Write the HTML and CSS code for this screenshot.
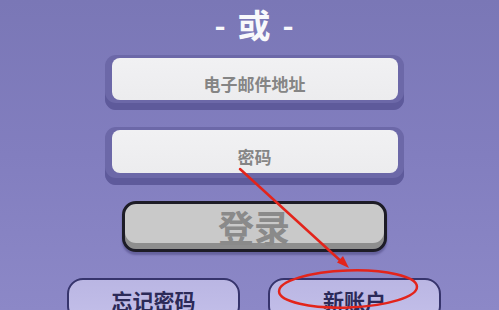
FILE: index.html
```html
<!DOCTYPE html>
<html lang="zh">
<head>
<meta charset="utf-8">
<link rel="stylesheet" href="styles.css">
</head>
<body>
<div class="screen">
  <div class="title"><span class="dash">-</span><span>或</span><span class="dash">-</span></div>
  <div class="field"><div class="field-inner">电子邮件地址</div></div>
  <div class="field field-pw"><div class="field-inner">密码</div></div>
  <div class="login">登录</div>
  <div class="row">
    <div class="small-btn">忘记密码</div>
    <div class="small-btn">新账户</div>
  </div>
  <svg class="annot" width="499" height="310" viewBox="0 0 499 310">
    <line x1="240" y1="169" x2="343" y2="263" stroke="#e3241b" stroke-width="2.5" stroke-linecap="round"/>
    <polygon points="349,268 337,262.5 343,256" fill="#e3241b"/>
    <ellipse cx="348" cy="289" rx="69" ry="18.5" fill="none" stroke="#e3241b" stroke-width="2.5" transform="rotate(-2 348 289)"/>
  </svg>
</div>
</body>
</html>
```

FILE: styles.css
```css
html, body {
  margin: 0;
  padding: 0;
}
body {
  width: 499px;
  height: 310px;
  overflow: hidden;
  font-family: "Noto Sans CJK SC", "Noto Sans", sans-serif;
}
.screen {
  position: relative;
  width: 499px;
  height: 310px;
  overflow: hidden;
  box-sizing: border-box;
  padding-left: 9px;
  display: flex;
  flex-direction: column;
  align-items: center;
  background: linear-gradient(180deg, #7a77b6 0%, #827ebf 50%, #8c88c7 100%);
}
.screen > * {
  flex-shrink: 0;
}
.title {
  margin-top: 6px;
  height: 36px;
  line-height: 36px;
  display: flex;
  gap: 12px;
  color: #f8f8fb;
  font-size: 33px;
  font-weight: 700;
}
.title .dash {
  font-size: 30px;
}
.field {
  margin-top: 13px;
  width: 299px;
  height: 55px;
  box-sizing: border-box;
  padding: 3px 6px 10px 7px;
  border-radius: 11px;
  background: #6c68a8;
  box-shadow: inset 0 -7px 0 #5e5a9b;
}
.field-pw {
  margin-top: 17px;
  height: 58px;
  padding-bottom: 12px;
}
.field-inner {
  height: 100%;
  border-radius: 8px;
  background: linear-gradient(180deg, #f1f1f3 0%, #ececee 100%);
  color: #858585;
  font-size: 17px;
  font-weight: 700;
  line-height: 1;
  display: flex;
  align-items: center;
  justify-content: center;
  padding-top: 9px;
  box-sizing: border-box;
}
.login {
  margin-top: 16px;
  width: 265px;
  height: 51px;
  box-sizing: border-box;
  border: 3px solid #1d1c26;
  border-radius: 14px;
  background: #c9c9c9;
  box-shadow: inset 0 -6px 0 #8e8e8e, 0 3px 2px #66629e;
  color: #8a8a8a;
  font-size: 36px;
  font-weight: 700;
  line-height: 1;
  display: flex;
  align-items: center;
  justify-content: center;
  padding-bottom: 2px;
}
.row {
  margin-top: 26px;
  display: flex;
  gap: 28px;
}
.small-btn {
  width: 173px;
  height: 44px;
  box-sizing: border-box;
  border: 2px solid #36346c;
  border-radius: 16px;
  background: linear-gradient(180deg, #bab6e3 0%, #c3bfe9 100%);
  color: #2c2a58;
  font-size: 21px;
  font-weight: 700;
  text-align: center;
  line-height: 1;
  padding-top: 10px;
}
.annot {
  position: absolute;
  left: 0;
  top: 0;
  pointer-events: none;
}
```
